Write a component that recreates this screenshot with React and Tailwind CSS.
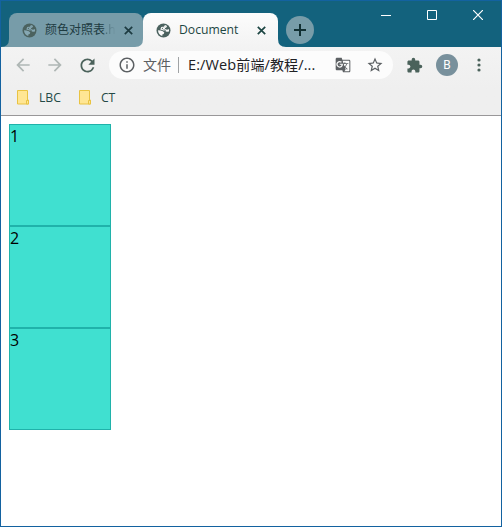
import React from "react";
import {
  MdArrowBack, MdArrowForward, MdRefresh, MdInfoOutline,
  MdStarBorder, MdExtension, MdGTranslate,
} from "react-icons/md";

function GlobeIcon() {
  return (
    <svg className="ml-px shrink-0" width="15" height="15" viewBox="0 0 15 15">
      <circle cx="7.5" cy="7.5" r="7" fill="#4b625f" />
      <path d="M9.4 2.1V3.3L8.3 4.4H7V5.5L6.3 6.3H8.3L9.7 7.5V8.6L11.2 8.8L13 8.5C13.2 7.6 13 6.7 12.7 6L11.2 6.7L9.4 6.2L8.8 5.2L10.6 4.2L11 3.1Z" fill="currentColor" />
      <path d="M2 7.2L4.6 7.5L6.8 8.3L8.3 9.4L7.7 11.1L6.3 11.6V12.9C3.8 12.3 2 10.1 2 7.2Z" fill="currentColor" />
      <path d="M9.4 2.2L8.5 4L5.7 4.5L5 6.2L8.6 7.2" fill="none" stroke="currentColor" strokeWidth="1.1" />
    </svg>
  );
}

function CloseIcon({ className }) {
  return (
    <svg className={className} width="9" height="9" viewBox="0 0 9 9" stroke="currentColor" strokeWidth="1.7">
      <path d="M0.8 0.8l7.4 7.4M8.2 0.8l-7.4 7.4" />
    </svg>
  );
}

function TitleBar() {
  return (
    <header className="flex h-[46px] bg-[#13627d] pl-2">
      <div className="relative mt-3 flex h-[34px] w-[134px] items-center rounded-t-lg bg-[#779ca9] pl-3 text-[#1d3b41]">
        <svg className="absolute bottom-0 -left-2" width="8" height="8"><path d="M0 8Q8 8 8 0V8Z" fill="#779ca9" /></svg>
        <span className="flex text-[#86a8b3]"><GlobeIcon /></span>
        <span className="ml-2 flex w-[73px] shrink-0 whitespace-nowrap text-[12px] leading-4">颜色对照表<span className="bg-gradient-to-r from-[#446570] to-[#779ca9] bg-clip-text text-transparent">.h</span></span>
        <CloseIcon className="ml-[6px] shrink-0" />
      </div>
      <div className="relative mt-3 flex h-[34px] w-[135px] items-center rounded-t-lg bg-gradient-to-b from-[#fcfcfc] to-[#f3f3f3] pl-3 text-[#1d4643]">
        <svg className="absolute bottom-0 -left-2" width="8" height="8"><path d="M0 8Q8 8 8 0V8Z" fill="#f3f3f3" /></svg>
        <svg className="absolute bottom-0 -right-2" width="8" height="8"><path d="M8 8Q0 8 0 0V8Z" fill="#f3f3f3" /></svg>
        <span className="flex text-[#fafafa]"><GlobeIcon /></span>
        <span className="ml-2 w-[78px] shrink-0 text-[12.2px] leading-4">Document</span>
        <CloseIcon className="shrink-0" />
      </div>
      <div className="mt-[15px] ml-2 flex size-7 items-center justify-center rounded-full bg-[#779ca9] text-[#112f33]">
        <svg width="12" height="12" stroke="currentColor" strokeWidth="2"><path d="M6 0v12M0 6h12" /></svg>
      </div>
      <div className="mt-[9px] ml-auto mr-[18px] flex h-[11px] gap-9 text-white">
        <svg width="10" height="10" stroke="currentColor"><path d="M0 5.5h10" /></svg>
        <svg width="10" height="10" fill="none" stroke="currentColor"><path d="M.5.5h9v9h-9z" /></svg>
        <svg width="10" height="10" stroke="currentColor" strokeWidth="1.2"><path d="M0 0l10 10M10 0L0 10" /></svg>
      </div>
    </header>
  );
}

function Toolbar() {
  return (
    <div className="flex h-9 items-center pl-3 text-[#4b625b]">
      <MdArrowBack size={20} className="text-[#afb7b5]" />
      <MdArrowForward size={20} className="ml-3 text-[#afb7b5]" />
      <MdRefresh size={21} className="ml-3" />
      <div className="ml-[11px] flex h-7 w-[284px] items-center rounded-full bg-[#fcfcfc] pl-[9px] text-[14px] text-[#5c6063]">
        <MdInfoOutline size={18} />
        <span className="ml-[7px] w-[28px] whitespace-nowrap leading-5">文件</span>
        <span className="ml-[7px] h-4 w-px bg-[#a0a3a5]" />
        <span className="ml-[9px] w-[130px] whitespace-nowrap text-[14.5px] leading-5 tracking-[0.12px] text-[#202124]">E:/Web<span className="text-[14px]">前端</span>/<span className="text-[14px]">教程</span>/...</span>
        <MdGTranslate size={16} className="ml-[17px]" />
        <MdStarBorder size={18} className="ml-[15px]" />
      </div>
      <MdExtension size={17} className="ml-[13px]" />
      <div className="ml-[13px] flex size-[22px] items-center justify-center rounded-full bg-[#78909c] font-['Roboto',sans-serif] text-[12px] text-white">B</div>
      <svg className="ml-[19px]" width="4" height="14" fill="currentColor">
        <circle cx="2" cy="2" r="1.6" /><circle cx="2" cy="7" r="1.6" /><circle cx="2" cy="12" r="1.6" />
      </svg>
    </div>
  );
}

function Bookmark({ label }) {
  return (
    <div className="flex items-center">
      <svg width="13" height="15" viewBox="0 0 13 15" fill="#ffe694" stroke="#e9c342">
        <path d="M.5.5h10v9.5h1v4h-11z" /><path d="M9.5 14v-3.5h2V14z" />
      </svg>
      <span className="ml-[9px] text-[12.2px] leading-4 text-[#244946]">{label}</span>
    </div>
  );
}

export default function App() {
  return (
    <div className="flex h-[527px] w-[502px] flex-col overflow-hidden border border-[#1362a0] bg-white font-['Open_Sans','Noto_Sans_CJK_SC',sans-serif]">
      <TitleBar />
      <div className="h-[69px] border-b border-[#999799] bg-gradient-to-b from-[#f3f3f3] to-[#efefef] to-60%">
        <Toolbar />
        <div className="flex h-[29px] items-center gap-[18px] pl-4">
          <Bookmark label="LBC" />
          <Bookmark label="CT" />
        </div>
      </div>
      <main className="flex flex-col p-2 text-[16px] leading-[22px] text-black">
        {[1, 2, 3].map((number) => (
          <div key={number} className="size-[102px] border border-[#20b2aa] bg-[#40e0d0]">{number}</div>
        ))}
      </main>
    </div>
  );
}
